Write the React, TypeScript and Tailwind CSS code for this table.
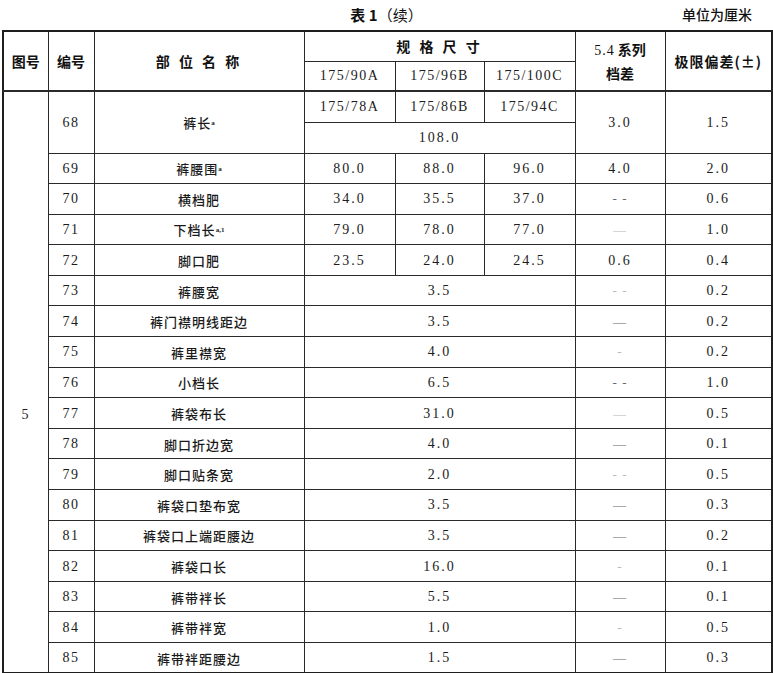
import React from "react";

const serif = "font-['Liberation_Serif','Noto_Sans_CJK_SC',serif]";
const cjk = "font-['Noto_Sans_CJK_SC',sans-serif]";

type Row = {
  no: string;
  name: string;
  sup?: string;
  sizes: string[];
  grade: string;
  dash?: string;
  faint?: boolean;
  tol: string;
};

const rows: Row[] = [
  { no: "69", name: "裤腰围", sup: "a", sizes: ["80.0", "88.0", "96.0"], grade: "4.0", tol: "2.0" },
  { no: "70", name: "横档肥", sizes: ["34.0", "35.5", "37.0"], grade: "", dash: "- -", tol: "0.6" },
  { no: "71", name: "下档长", sup: "a,1", sizes: ["79.0", "78.0", "77.0"], grade: "", dash: "—", faint: true, tol: "1.0" },
  { no: "72", name: "脚口肥", sizes: ["23.5", "24.0", "24.5"], grade: "0.6", tol: "0.4" },
  { no: "73", name: "裤腰宽", sizes: ["3.5"], grade: "", dash: "- -", faint: true, tol: "0.2" },
  { no: "74", name: "裤门襟明线距边", sizes: ["3.5"], grade: "", dash: "—", tol: "0.2" },
  { no: "75", name: "裤里襟宽", sizes: ["4.0"], grade: "", dash: "-", faint: true, tol: "0.2" },
  { no: "76", name: "小档长", sizes: ["6.5"], grade: "", dash: "- -", tol: "1.0" },
  { no: "77", name: "裤袋布长", sizes: ["31.0"], grade: "", dash: "—", faint: true, tol: "0.5" },
  { no: "78", name: "脚口折边宽", sizes: ["4.0"], grade: "", dash: "—", tol: "0.1" },
  { no: "79", name: "脚口贴条宽", sizes: ["2.0"], grade: "", dash: "- -", faint: true, tol: "0.5" },
  { no: "80", name: "裤袋口垫布宽", sizes: ["3.5"], grade: "", dash: "—", tol: "0.3" },
  { no: "81", name: "裤袋口上端距腰边", sizes: ["3.5"], grade: "", dash: "—", tol: "0.2" },
  { no: "82", name: "裤袋口长", sizes: ["16.0"], grade: "", dash: "-", faint: true, tol: "0.1" },
  { no: "83", name: "裤带袢长", sizes: ["5.5"], grade: "", dash: "—", tol: "0.1" },
  { no: "84", name: "裤带袢宽", sizes: ["1.0"], grade: "", dash: "-", faint: true, tol: "0.5" },
  { no: "85", name: "裤带袢距腰边", sizes: ["1.5"], grade: "", dash: "—", tol: "0.3" },
];

const td = "border border-[#2a2a2a] text-center align-middle p-0";
const num = `${serif} text-[14px] tracking-[1.5px] text-[#1c1c1c]`;
const th = `${cjk} font-bold text-[14px] text-[#111]`;

function Name({ name, sup }: { name: string; sup?: string }) {
  return (
    <span className={`${cjk} font-medium text-[13px] tracking-[1px] text-[#1a1a1a]`}>
      {name}
      {sup && (
        <sup className={`${serif} text-[7px] font-bold tracking-normal`}>{sup}</sup>
      )}
    </span>
  );
}

function Dash({ text, faint }: { text: string; faint?: boolean }) {
  return (
    <span
      className={`${serif} text-[13px] tracking-[1px] ${faint ? "text-[#b8b8b8]" : "text-[#666]"}`}
    >
      {text}
    </span>
  );
}

export default function App() {
  return (
    <div className="w-[773px] h-[673px] bg-white overflow-hidden">
      <div className="relative h-[30px] flex items-center justify-center">
        <div className={`${cjk} text-[15px] text-[#111] pt-[1px]`}>
          <span className="font-bold">表 1</span>
          <span>（续）</span>
        </div>
        <div className={`absolute right-[21px] top-[4px] ${cjk} text-[14px] text-[#111] font-medium`}>
          单位为厘米
        </div>
      </div>
      <table className="ml-[2px] w-[769px] table-fixed border-collapse border-2 border-[#1e1e1e]">
        <colgroup>
          <col className="w-[45px]" />
          <col className="w-[46px]" />
          <col className="w-[210px]" />
          <col className="w-[91px]" />
          <col className="w-[89px]" />
          <col className="w-[91px]" />
          <col className="w-[90px]" />
          <col className="w-[107px]" />
        </colgroup>
        <thead>
          <tr className="h-[30px]">
            <th rowSpan={2} className={`${td} border-b-2 ${th}`}>图号</th>
            <th rowSpan={2} className={`${td} border-b-2 ${th}`}>编号</th>
            <th rowSpan={2} className={`${td} border-b-2 ${th}`}>
              <span className="tracking-[3px]">部 位 名 称</span>
            </th>
            <th colSpan={3} className={`${td} ${th}`}>
              <span className="tracking-[3px]">规 格 尺 寸</span>
            </th>
            <th rowSpan={2} className={`${td} border-b-2 ${th} leading-[22px]`}>
              <div>
                <span className={`${serif} font-normal tracking-[1px]`}>5.4</span> 系列
              </div>
              <div>档差</div>
            </th>
            <th rowSpan={2} className={`${td} border-b-2 ${th}`}>
              <span className="tracking-[1px]">极限偏差(±)</span>
            </th>
          </tr>
          <tr className="h-[30px]">
            <th className={`${td} border-b-2 font-normal ${num}`}>175/90A</th>
            <th className={`${td} border-b-2 font-normal ${num}`}>175/96B</th>
            <th className={`${td} border-b-2 font-normal ${num}`}>175/100C</th>
          </tr>
        </thead>
        <tbody>
          <tr className="h-[31px]">
            <td rowSpan={19} className={`${td} align-top pt-[312px] ${num}`}>5</td>
            <td rowSpan={2} className={`${td} ${num}`}>68</td>
            <td rowSpan={2} className={td}>
              <Name name="裤长" sup="a" />
            </td>
            <td className={`${td} ${num}`}>175/78A</td>
            <td className={`${td} ${num}`}>175/86B</td>
            <td className={`${td} ${num}`}>175/94C</td>
            <td rowSpan={2} className={`${td} ${num} tracking-[2px]`}>3.0</td>
            <td rowSpan={2} className={`${td} ${num} tracking-[2px]`}>1.5</td>
          </tr>
          <tr className="h-[31px]">
            <td colSpan={3} className={`${td} ${num} tracking-[2px]`}>108.0</td>
          </tr>
          {rows.map((r) => (
            <tr key={r.no} className="h-[30.6px]">
              <td className={`${td} ${num}`}>{r.no}</td>
              <td className={td}>
                <Name name={r.name} sup={r.sup} />
              </td>
              {r.sizes.length === 3 ? (
                r.sizes.map((s, i) => (
                  <td key={i} className={`${td} ${num} tracking-[2px]`}>
                    {s}
                  </td>
                ))
              ) : (
                <td colSpan={3} className={`${td} ${num} tracking-[2px]`}>
                  {r.sizes[0]}
                </td>
              )}
              <td className={`${td} ${num} tracking-[2px]`}>
                {r.dash ? <Dash text={r.dash} faint={r.faint} /> : r.grade}
              </td>
              <td className={`${td} ${num} tracking-[2px]`}>{r.tol}</td>
            </tr>
          ))}
        </tbody>
      </table>
    </div>
  );
}
